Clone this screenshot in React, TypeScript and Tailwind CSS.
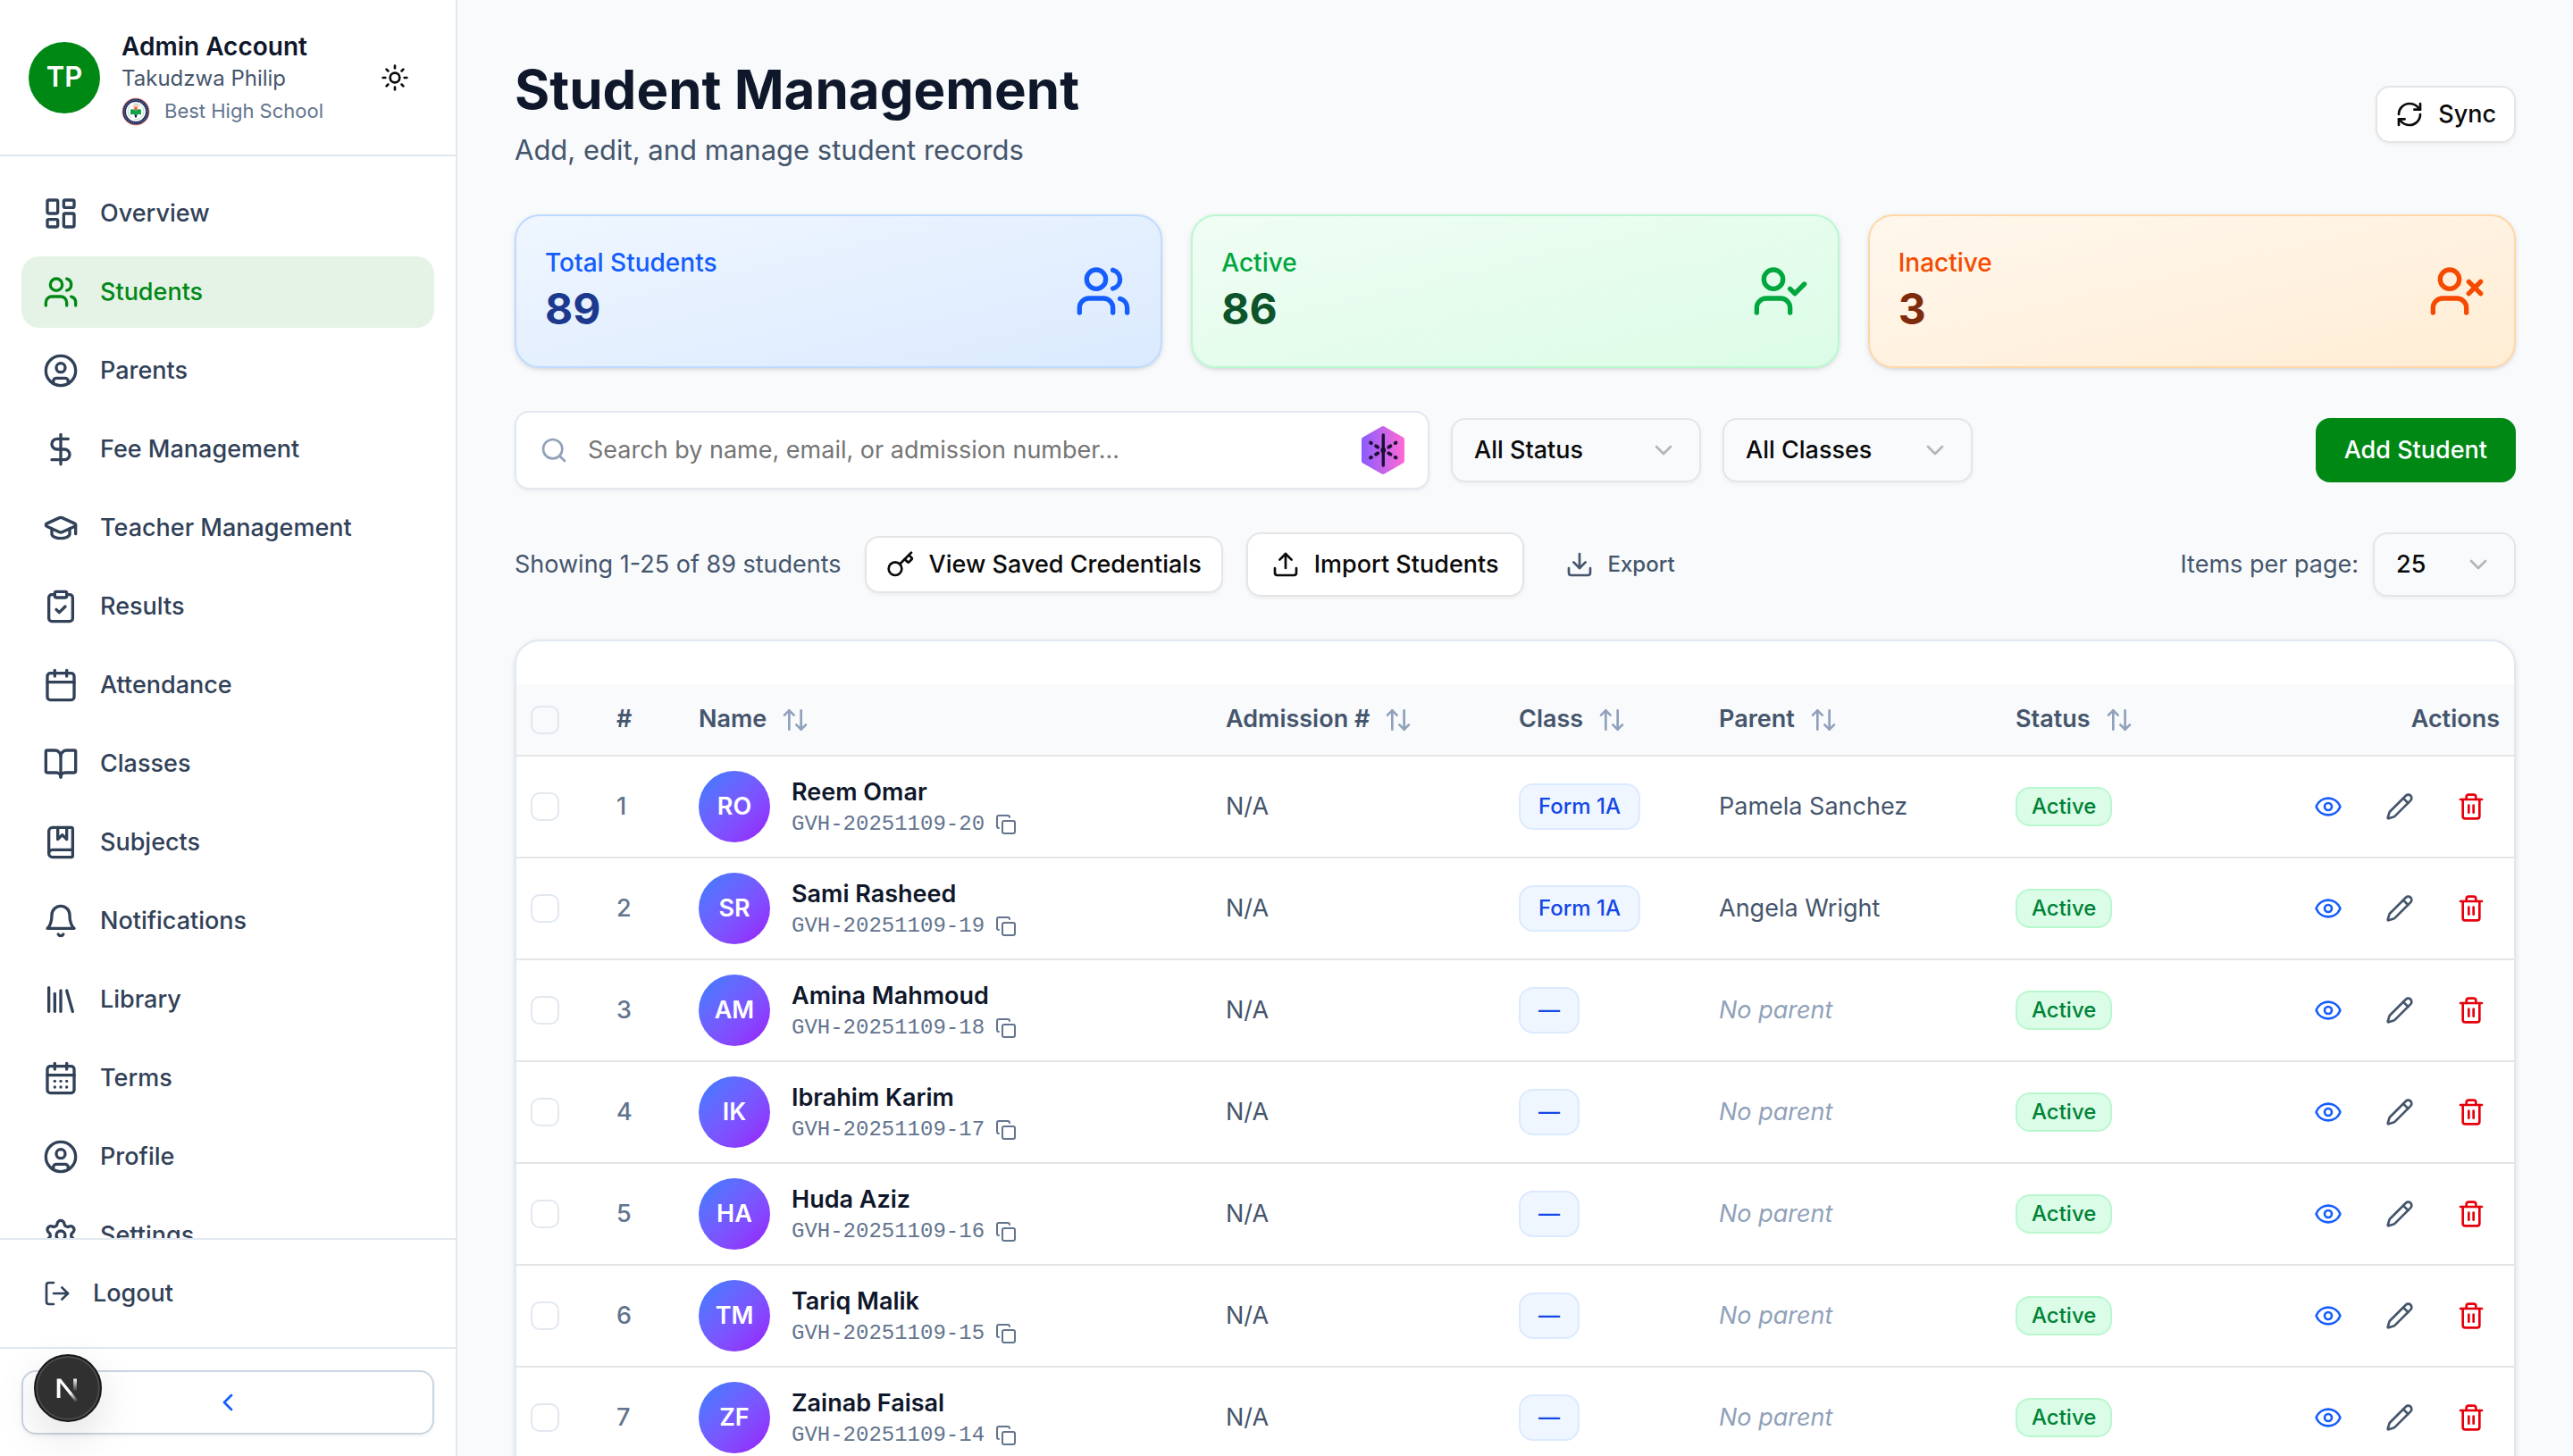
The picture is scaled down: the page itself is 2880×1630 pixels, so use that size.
import {
  ArrowUpDown,
  BookMarked,
  BookOpen,
  Calendar,
  CalendarDays,
  ChevronDown,
  ChevronLeft,
  CircleUser,
  ClipboardCheck,
  Copy,
  DollarSign,
  Download,
  Eye,
  GraduationCap,
  Key,
  LayoutDashboard,
  Library,
  LogOut,
  type LucideIcon,
  Pencil,
  RefreshCw,
  Search,
  Settings,
  Sun,
  Trash2,
  Upload,
  UserCheck,
  Users,
  UserX,
} from "lucide-react";
import type { ComponentType, ReactNode } from "react";

// --- data ---

type IconType = LucideIcon | ComponentType<{ className?: string }>;

const NAV_ITEMS: { label: string; icon: IconType }[] = [
  { label: "Overview", icon: LayoutDashboard },
  { label: "Students", icon: Users },
  { label: "Parents", icon: CircleUser },
  { label: "Fee Management", icon: DollarSign },
  { label: "Teacher Management", icon: GraduationCap },
  { label: "Results", icon: ClipboardCheck },
  { label: "Attendance", icon: Calendar },
  { label: "Classes", icon: BookOpen },
  { label: "Subjects", icon: BookMarked },
  { label: "Notifications", icon: BellIcon },
  { label: "Library", icon: Library },
  { label: "Terms", icon: CalendarDays },
  { label: "Profile", icon: CircleUser },
  { label: "Settings", icon: Settings },
];

const STATS = [
  {
    label: "Total Students",
    value: 89,
    icon: Users,
    card: "border-blue-200 from-blue-50 to-blue-100",
    accent: "text-blue-600",
    number: "text-blue-900",
  },
  {
    label: "Active",
    value: 86,
    icon: UserCheck,
    card: "border-green-200 from-green-50 to-green-100",
    accent: "text-green-600",
    number: "text-green-900",
  },
  {
    label: "Inactive",
    value: 3,
    icon: UserX,
    card: "border-orange-200 from-orange-50 to-orange-100",
    accent: "text-orange-600",
    number: "text-orange-900",
  },
];

interface Student {
  name: string;
  code: string;
  className?: string;
  parent?: string;
}

const STUDENTS: Student[] = [
  {
    name: "Reem Omar",
    code: "GVH-20251109-20",
    className: "Form 1A",
    parent: "Pamela Sanchez",
  },
  {
    name: "Sami Rasheed",
    code: "GVH-20251109-19",
    className: "Form 1A",
    parent: "Angela Wright",
  },
  { name: "Amina Mahmoud", code: "GVH-20251109-18" },
  { name: "Ibrahim Karim", code: "GVH-20251109-17" },
  { name: "Huda Aziz", code: "GVH-20251109-16" },
  { name: "Tariq Malik", code: "GVH-20251109-15" },
  { name: "Zainab Faisal", code: "GVH-20251109-14" },
];

const OUTLINE_BUTTON =
  "flex items-center gap-4 rounded-2xl border-2 border-neutral-200 bg-white font-medium text-neutral-950 shadow-[0_2px_4px_rgba(0,0,0,0.05)]";

function initials(name: string) {
  return name
    .split(" ")
    .map((part) => part[0])
    .join("");
}

// --- icons ---

function BellIcon({ className }: { className?: string }) {
  return (
    <svg
      viewBox="0 0 24 24"
      fill="none"
      stroke="currentColor"
      strokeWidth="2"
      strokeLinecap="round"
      strokeLinejoin="round"
      className={className}
      aria-hidden="true"
    >
      <path d="M6 8a6 6 0 0 1 12 0c0 7 3 9 3 9H3s3-2 3-9" />
      <path d="M10.3 21a1.94 1.94 0 0 0 3.4 0" />
    </svg>
  );
}

function SchoolCrest() {
  return (
    <svg viewBox="0 0 32 32" className="size-8 shrink-0" aria-hidden="true">
      <circle cx="16" cy="16" r="15.5" fill="#e9a08c" />
      <circle cx="16" cy="16" r="14.6" fill="#1d2456" />
      <circle
        cx="16"
        cy="16"
        r="12.8"
        fill="none"
        stroke="#7d83aa"
        strokeWidth="1.2"
        strokeDasharray="1.2 1"
      />
      <circle cx="16" cy="16" r="11" fill="#fff" />
      <circle
        cx="16"
        cy="16"
        r="9"
        fill="none"
        stroke="#a9dcc0"
        strokeWidth="1"
        strokeDasharray="16 4"
      />
      <path d="M12.5 9l3.5-1.5L19.5 9l-1 3h-5z" fill="#f6c9bd" />
      <circle cx="16" cy="12.5" r="1.8" fill="#f0562f" />
      <path
        d="M10 13.8c2.200-1 4.400-.4 6 .9 1.600-1.300 3.800-1.900 6-.9v5.600c-2.200-.6-4.400-.2-6 1-1.600-1.200-3.800-1.600-6-1z"
        fill="#14a24a"
      />
      <path d="M14.500 19.500h3l-.5 3h-2z" fill="#1d2456" />
    </svg>
  );
}

function AssistantHexagon() {
  return (
    <svg viewBox="0 0 48 54" className="h-[54px] w-12" aria-hidden="true">
      <defs>
        <linearGradient id="hexagon-fill" x1="0" x2="1" y1="0" y2="0">
          <stop offset="0" stopColor="#8b5cff" />
          <stop offset="1" stopColor="#ff6ad5" />
        </linearGradient>
      </defs>
      <path
        d="M22.5 0.5a3 3 0 0 1 3 0l21 12a3 3 0 0 1 1.5 2.6v23.8a3 3 0 0 1-1.5 2.6l-21 12a3 3 0 0 1-3 0l-21-12A3 3 0 0 1 0 38.9V15.1a3 3 0 0 1 1.5-2.6z"
        fill="url(#hexagon-fill)"
      />
      <g stroke="#1c1038" strokeLinecap="round">
        <path d="M24.3 10v34" strokeWidth="3.4" />
        <g strokeWidth="4">
          <path d="M10.2 18.7l.6.3M16.2 22.4l2 1.2M38.4 18.7l-.6.3M32.4 22.4l-2 1.2" />
          <path d="M10.2 35.3l.6-.3M16.2 31.6l2-1.2M38.4 35.3l-.6-.3M32.4 31.6l-2-1.2" />
        </g>
      </g>
      <circle cx="24.3" cy="27" r="3" fill="#1c1038" />
    </svg>
  );
}

function NextMark() {
  return (
    <svg viewBox="0 0 76 76" className="size-full" aria-hidden="true">
      <defs>
        <linearGradient id="next-diagonal" x1="62%" y1="62%" x2="95%" y2="100%">
          <stop offset="0" stopColor="#fff" />
          <stop offset="1" stopColor="#fff" stopOpacity="0" />
        </linearGradient>
        <linearGradient id="next-stem" x1="0" y1="0" x2="0" y2="1">
          <stop offset="0" stopColor="#fff" />
          <stop offset="1" stopColor="#fff" stopOpacity="0" />
        </linearGradient>
      </defs>
      <path
        d="M25 27h4.5l20.5 25.5-2.8 2L29 32v17.5h-4z"
        fill="url(#next-diagonal)"
      />
      <rect x="44.5" y="27" width="4" height="15" fill="url(#next-stem)" />
    </svg>
  );
}

// --- sidebar ---

function Sidebar() {
  return (
    <aside className="flex w-[512px] shrink-0 flex-col border-r-2 border-slate-200 bg-white">
      <header className="flex items-center gap-6 border-b-2 border-slate-200 px-8 py-8">
        <div className="flex size-20 shrink-0 items-center justify-center rounded-full bg-[#008815] text-[31px] font-semibold text-white">
          TP
        </div>
        <div className="min-w-0 flex-1">
          <p className="text-[28px] leading-10 font-semibold text-slate-900">
            Admin Account
          </p>
          <p className="text-[24px] leading-8 text-slate-600">
            Takudzwa Philip
          </p>
          <p className="mt-1 flex items-center gap-4 text-[22px] leading-[33px] text-slate-500">
            <SchoolCrest />
            Best High School
          </p>
        </div>
        <button
          type="button"
          aria-label="Toggle theme"
          className="flex size-[72px] items-center justify-center text-neutral-950"
        >
          <Sun className="size-8" />
        </button>
      </header>

      <nav className="flex min-h-0 flex-1 flex-col gap-2 overflow-hidden p-6">
        {NAV_ITEMS.map(({ label, icon: Icon }) => (
          <a
            key={label}
            href={`#${label.toLowerCase().replace(" ", "-")}`}
            className={
              label === "Students"
                ? "flex h-20 shrink-0 items-center gap-6 rounded-[20px] bg-[#e5f3e7] px-6 text-[27px] font-medium text-[#008815]"
                : "flex h-20 shrink-0 items-center gap-6 rounded-[20px] px-6 text-[27px] font-medium text-slate-700"
            }
          >
            <Icon className="size-10 shrink-0" />
            {label}
          </a>
        ))}
      </nav>

      <div className="border-t-2 border-slate-200 p-6">
        <button
          type="button"
          className="flex h-[72px] w-full items-center gap-6 px-6 text-[27px] font-medium text-slate-700"
        >
          <LogOut className="size-8" />
          Logout
        </button>
      </div>
      <div className="relative border-t-2 border-slate-200 p-6">
        <button
          type="button"
          aria-label="Collapse sidebar"
          className="flex h-[72px] w-full items-center justify-center rounded-2xl border-2 border-slate-300 bg-white text-blue-600 shadow-[0_2px_4px_rgba(0,0,0,0.05)]"
        >
          <ChevronLeft className="size-8" />
        </button>
        <button
          type="button"
          aria-label="Open dev tools"
          className="absolute bottom-[38px] left-[38px] size-[76px] rounded-full border-2 border-neutral-900 bg-[#303030] shadow-[inset_0_0_0_2px_#4a4a4a,0_16px_48px_rgba(0,0,0,0.12)]"
        >
          <NextMark />
        </button>
      </div>
    </aside>
  );
}

// --- toolbar parts ---

function SelectBox({
  label,
  value,
  className,
}: {
  label: string;
  value: string;
  className: string;
}) {
  return (
    <div className={`relative ${className}`}>
      <select
        aria-label={label}
        defaultValue={value}
        className="block h-[72px] w-full appearance-none rounded-2xl border-2 border-neutral-200 bg-transparent px-6 text-[27px] font-medium text-neutral-950 shadow-[0_2px_4px_rgba(0,0,0,0.05)]"
      >
        <option>{value}</option>
      </select>
      <ChevronDown className="pointer-events-none absolute top-5 right-[26px] size-8 text-[#b5b6b8]" />
    </div>
  );
}

function StatCards() {
  return (
    <section className="mt-12 grid grid-cols-3 gap-8">
      {STATS.map(({ label, value, icon: Icon, card, accent, number }) => (
        <div
          key={label}
          className={`flex items-center justify-between rounded-[28px] border-2 bg-gradient-to-br p-8 shadow-[0_2px_6px_rgba(0,0,0,0.1),0_2px_4px_-2px_rgba(0,0,0,0.1)] ${card}`}
        >
          <div>
            <p className={`text-[28px] leading-10 font-medium ${accent}`}>
              {label}
            </p>
            <p className={`text-[48px] leading-[64px] font-bold ${number}`}>
              {value}
            </p>
          </div>
          <Icon className={`size-16 ${accent}`} />
        </div>
      ))}
    </section>
  );
}

function Filters() {
  return (
    <section className="mt-12 flex items-center gap-6">
      <label className="flex h-[88px] max-w-[1024px] flex-1 items-center gap-[22px] rounded-2xl border-2 border-slate-200 bg-white px-[26px] shadow-[0_2px_4px_rgba(0,0,0,0.05)]">
        <Search className="size-8 shrink-0 text-slate-400" />
        <input
          type="text"
          aria-label="Search students"
          placeholder="Search by name, email, or admission number..."
          className="min-w-0 flex-1 text-[27px] outline-none placeholder:text-[#757575]"
        />
        <AssistantHexagon />
      </label>
      <SelectBox label="Status" value="All Status" className="w-[280px]" />
      <SelectBox label="Class" value="All Classes" className="w-[280px]" />
      <button
        type="button"
        className="ml-auto h-[72px] rounded-2xl bg-[#008815] px-8 text-[27px] font-medium text-white"
      >
        Add Student
      </button>
    </section>
  );
}

function ResultsBar() {
  return (
    <section className="mt-12 flex items-center gap-[26px] text-[27px]">
      <p className="text-slate-600">Showing 1-25 of 89 students</p>
      <button type="button" className={`h-16 px-[22px] ${OUTLINE_BUTTON}`}>
        <Key className="size-8" />
        View Saved Credentials
      </button>
      <button type="button" className={`h-[72px] px-[26px] ${OUTLINE_BUTTON}`}>
        <Upload className="size-8" />
        Import Students
      </button>
      <button
        type="button"
        className="flex h-16 items-center gap-4 px-5 text-[24px] font-medium text-slate-600"
      >
        <Download className="size-8" />
        Export
      </button>
      <div className="ml-auto flex items-center gap-4">
        <span className="text-slate-600">Items per page:</span>
        <SelectBox label="Items per page" value="25" className="w-40" />
      </div>
    </section>
  );
}

// --- table ---

function SortHeader({ children }: { children: ReactNode }) {
  return (
    <th className="px-4 text-left font-semibold">
      <button type="button" className="flex items-center gap-4">
        {children}
        <ArrowUpDown className="size-8 text-slate-400" />
      </button>
    </th>
  );
}

function RowCheckbox({ label }: { label: string }) {
  return (
    <input
      type="checkbox"
      aria-label={label}
      className="block size-8 appearance-none rounded-[10px] border-2 border-slate-200"
    />
  );
}

function StudentRow({ student, index }: { student: Student; index: number }) {
  return (
    <tr className="h-[114px] border-b-2 border-neutral-200">
      <td className="px-4">
        <RowCheckbox label={`Select ${student.name}`} />
      </td>
      <td className="px-4 font-medium text-slate-500">{index}</td>
      <td className="px-4">
        <div className="flex items-center gap-6">
          <div className="flex size-20 shrink-0 items-center justify-center rounded-full bg-gradient-to-br from-blue-500 to-purple-600 font-semibold text-white">
            {initials(student.name)}
          </div>
          <div>
            <p className="leading-10 font-semibold text-slate-900">
              {student.name}
            </p>
            <p className="flex items-center gap-3 font-['Liberation_Mono',monospace] text-[24px] leading-8 text-slate-500">
              {student.code}
              <button type="button" aria-label={`Copy ${student.code}`}>
                <Copy className="size-6" />
              </button>
            </p>
          </div>
        </div>
      </td>
      <td className="px-4">N/A</td>
      <td className="px-4">
        <span className="inline-flex h-[52px] items-center rounded-2xl border-2 border-blue-100 bg-blue-50 px-5 text-[24px] font-medium text-blue-700">
          {student.className ?? "—"}
        </span>
      </td>
      <td className="px-4">
        {student.parent ?? (
          <span className="text-slate-400 italic">No parent</span>
        )}
      </td>
      <td className="px-4">
        <span className="inline-flex h-11 items-center rounded-2xl border-2 border-green-200 bg-green-100 px-4 text-[24px] font-medium text-green-700">
          Active
        </span>
      </td>
      <td className="px-4">
        <div className="flex justify-end gap-4">
          <button
            type="button"
            aria-label={`View ${student.name}`}
            className="flex size-16 items-center justify-center text-blue-600"
          >
            <Eye className="size-8" />
          </button>
          <button
            type="button"
            aria-label={`Edit ${student.name}`}
            className="flex size-16 items-center justify-center text-slate-600"
          >
            <Pencil className="size-8" />
          </button>
          <button
            type="button"
            aria-label={`Delete ${student.name}`}
            className="flex size-16 items-center justify-center text-red-600"
          >
            <Trash2 className="size-8" />
          </button>
        </div>
      </td>
    </tr>
  );
}

function StudentTable() {
  return (
    <section className="mt-12 overflow-hidden rounded-[28px] border-2 border-slate-200 bg-white py-12 shadow-[0_2px_6px_rgba(0,0,0,0.1),0_2px_4px_-2px_rgba(0,0,0,0.1)]">
      <table className="w-full table-fixed text-[27px] text-slate-600">
        <colgroup>
          <col className="w-24" />
          <col className="w-[92px]" />
          <col />
          <col className="w-[328px]" />
          <col className="w-[224px]" />
          <col className="w-[332px]" />
          <col className="w-[256px]" />
          <col className="w-[318px]" />
        </colgroup>
        <thead>
          <tr className="h-20 border-b-2 border-neutral-200 bg-slate-50">
            <th className="px-4">
              <RowCheckbox label="Select all students" />
            </th>
            <th className="px-4 text-left font-semibold">#</th>
            <SortHeader>Name</SortHeader>
            <SortHeader>Admission #</SortHeader>
            <SortHeader>Class</SortHeader>
            <SortHeader>Parent</SortHeader>
            <SortHeader>Status</SortHeader>
            <th className="px-4 text-right font-semibold">Actions</th>
          </tr>
        </thead>
        <tbody>
          {STUDENTS.map((student, i) => (
            <StudentRow key={student.code} student={student} index={i + 1} />
          ))}
        </tbody>
      </table>
    </section>
  );
}

export default function App() {
  return (
    <div className="flex h-screen overflow-hidden bg-slate-50 font-[Inter,sans-serif]">
      <Sidebar />
      <main className="min-w-0 flex-1 overflow-hidden p-16">
        <header className="flex items-center justify-between">
          <div>
            <h1 className="text-[60px] leading-[72px] font-bold text-slate-900">
              Student Management
            </h1>
            <p className="mt-2 text-[31px] leading-[48px] text-slate-600">
              Add, edit, and manage student records
            </p>
          </div>
          <button
            type="button"
            className={`h-16 px-5 text-[27px] ${OUTLINE_BUTTON}`}
          >
            <RefreshCw className="size-8" />
            Sync
          </button>
        </header>
        <StatCards />
        <Filters />
        <ResultsBar />
        <StudentTable />
      </main>
    </div>
  );
}
